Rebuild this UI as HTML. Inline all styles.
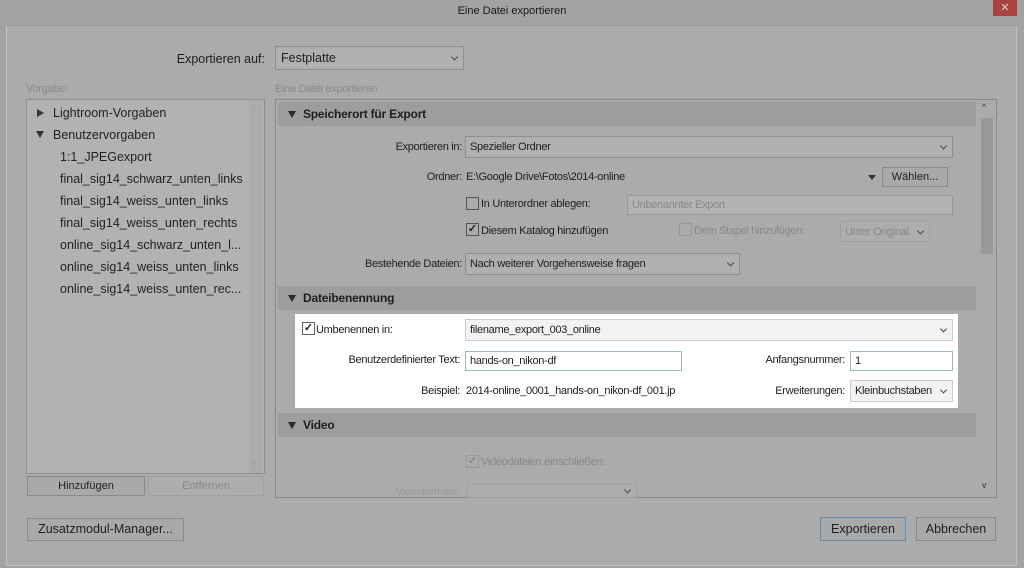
<!DOCTYPE html>
<html><head><meta charset="utf-8"><style>
*{box-sizing:border-box;margin:0;padding:0}
body{width:1024px;height:568px;background:#a2a2a2;font-family:"Liberation Sans",sans-serif;color:#1e1e1e;position:relative;overflow:hidden}
.a{position:absolute;white-space:nowrap}
.t{font-size:11px;letter-spacing:-0.3px;line-height:14px}
.r{text-align:right}
.sel{position:absolute;background:#b0b0b0;border:1px solid #8e8e8e;font-size:11px;letter-spacing:-0.3px;padding:0 4px;color:#1e1e1e;display:flex;align-items:center}
.sel:after{content:"";position:absolute;right:6px;top:50%;width:4px;height:4px;border-right:1.5px solid #444;border-bottom:1.5px solid #444;transform:translateY(-70%) rotate(45deg)}
.inp{position:absolute;background:#b3b3b3;border:1px solid #999;font-size:11px;padding:0 4px;letter-spacing:-0.3px;display:flex;align-items:center}
.btn{position:absolute;background:#a9a9a9;border:1px solid #8a8a8a;text-align:center;font-size:12px;line-height:20px;color:#1e1e1e}
.hdr{position:absolute;left:278px;width:698px;height:24px;background:#9d9d9d;font-weight:bold;font-size:12px;line-height:24px;padding-left:25px;letter-spacing:-0.2px}
.hdr:before{content:"";position:absolute;left:10px;top:9px;border-left:4.5px solid transparent;border-right:4.5px solid transparent;border-top:7px solid #2a2a2a}
.cb{position:absolute;width:13px;height:13px;border:1px solid #555;background:transparent;font-size:11px;line-height:11px;text-align:center;font-weight:bold}
.li{position:absolute;font-size:12.5px;left:60px;color:#222}
</style></head><body>
<div class="a" style="left:0;top:5px;width:1024px;text-align:center;font-size:11px;color:#1a1a1a">Eine Datei exportieren</div>
<div class="a" style="left:993px;top:0;width:24px;height:16px;background:#a94242;color:#e8c8c8;font-size:11px;text-align:center;line-height:16px">✕</div>
<div class="a" style="left:6px;top:25px;width:1011px;height:541px;background:#ababab;border:1px solid #c0c0c0;border-top-color:#9a9a9a"></div>

<div class="a" style="left:120px;top:52px;width:145px;text-align:right;font-size:12.5px">Exportieren auf:</div>
<div class="sel" style="left:275px;top:46px;width:189px;height:24px;font-size:12.5px;padding:0 5px;letter-spacing:0">Festplatte</div>

<div class="a t" style="left:26px;top:82px;color:#8a8a8a">Vorgabe:</div>
<div class="a t" style="left:275px;top:82px;color:#8a8a8a">Eine Datei exportieren</div>

<div class="a" style="left:26px;top:99px;width:239px;height:375px;background:#b2b2b2;border:1px solid #8f8f8f"></div>
<div class="a" style="left:249px;top:100px;width:14px;height:373px;background:#ababab"></div>
<div class="a" style="left:252px;top:104px;font-size:8px;color:#999">^</div>
<div class="a" style="left:251px;top:457px;font-size:9px;color:#999">v</div>
<div class="a" style="left:37px;top:109px;border-top:4.5px solid transparent;border-bottom:4.5px solid transparent;border-left:7px solid #333"></div>
<div class="li" style="left:53px;top:106px">Lightroom-Vorgaben</div>
<div class="a" style="left:36px;top:131px;border-left:4.5px solid transparent;border-right:4.5px solid transparent;border-top:7px solid #333"></div>
<div class="li" style="left:53px;top:128px">Benutzervorgaben</div>
<div class="li" style="top:150px">1:1_JPEGexport</div>
<div class="li" style="top:172px">final_sig14_schwarz_unten_links</div>
<div class="li" style="top:194px">final_sig14_weiss_unten_links</div>
<div class="li" style="top:216px">final_sig14_weiss_unten_rechts</div>
<div class="li" style="top:238px">online_sig14_schwarz_unten_l...</div>
<div class="li" style="top:260px">online_sig14_weiss_unten_links</div>
<div class="li" style="top:282px">online_sig14_weiss_unten_rec...</div>

<div class="btn" style="left:27px;top:476px;width:118px;height:20px;font-size:11px;line-height:18px">Hinzufügen</div>
<div class="btn" style="left:148px;top:476px;width:116px;height:20px;font-size:11px;line-height:18px;color:#8a8a8a;background:#adadad;border-color:#a0a0a0">Entfernen</div>
<div class="btn" style="left:27px;top:518px;width:157px;height:23px;font-size:12.5px">Zusatzmodul-Manager...</div>

<div class="a" style="left:275px;top:99px;width:722px;height:399px;background:#ababab;border:1px solid #8a8a8a"></div>
<div class="a" style="left:979px;top:100px;width:17px;height:397px;background:#ababab"></div>
<div class="a" style="left:981px;top:118px;width:12px;height:136px;background:#989898"></div>
<div class="a" style="left:982px;top:102px;font-size:9px;color:#333">^</div>
<div class="a" style="left:982px;top:480px;font-size:9px;color:#333">v</div>

<div class="hdr" style="top:102px">Speicherort für Export</div>
<div class="a t r" style="left:300px;width:162px;top:140px">Exportieren in:</div>
<div class="sel" style="left:465px;top:136px;width:488px;height:22px">Spezieller Ordner</div>
<div class="a t r" style="left:300px;width:162px;top:170px">Ordner:</div>
<div class="a t" style="left:466px;top:170px">E:\Google Drive\Fotos\2014-online</div>
<div class="a" style="left:868px;top:175px;border-left:4px solid transparent;border-right:4px solid transparent;border-top:5px solid #333"></div>
<div class="btn" style="left:882px;top:167px;width:66px;height:20px;font-size:11px;line-height:18px">Wählen...</div>
<div class="cb" style="left:466px;top:197px"></div>
<div class="a t" style="left:481px;top:197px">In Unterordner ablegen:</div>
<div class="inp" style="left:627px;top:195px;width:326px;height:20px;color:#888">Unbenannter Export</div>
<div class="cb" style="left:466px;top:223px">✓</div>
<div class="a t" style="left:481px;top:224px">Diesem Katalog hinzufügen</div>
<div class="cb" style="left:679px;top:223px;border-color:#999"></div>
<div class="a t" style="left:694px;top:224px;color:#888">Dem Stapel hinzufügen:</div>
<div class="sel" style="left:840px;top:221px;width:90px;height:21px;color:#888;border-color:#a0a0a0;background:#adadad">Unter Original</div>
<div class="a t r" style="left:300px;width:162px;top:257px">Bestehende Dateien:</div>
<div class="sel" style="left:465px;top:253px;width:275px;height:22px">Nach weiterer Vorgehensweise fragen</div>

<div class="hdr" style="top:286px">Dateibenennung</div>
<div class="a" style="left:295px;top:314px;width:663px;height:94px;background:#fff"></div>
<div class="cb" style="left:302px;top:322px;background:#fff;border-color:#666">✓</div>
<div class="a t" style="left:316px;top:323px">Umbenennen in:</div>
<div class="sel" style="left:465px;top:319px;width:488px;height:22px;background:#f2f2f2;border-color:#ccc">filename_export_003_online</div>
<div class="a t r" style="left:300px;width:160px;top:353px">Benutzerdefinierter Text:</div>
<div class="inp" style="left:465px;top:351px;width:217px;height:20px;background:#fff;border-color:#9bb">hands-on_nikon-df</div>
<div class="a t r" style="left:700px;width:145px;top:353px">Anfangsnummer:</div>
<div class="inp" style="left:850px;top:351px;width:103px;height:20px;background:#fff;border-color:#9bb">1</div>
<div class="a t r" style="left:300px;width:160px;top:384px">Beispiel:</div>
<div class="a t" style="left:466px;top:384px">2014-online_0001_hands-on_nikon-df_001.jp</div>
<div class="a t r" style="left:700px;width:145px;top:384px">Erweiterungen:</div>
<div class="sel" style="left:850px;top:380px;width:103px;height:22px;background:#f2f2f2;border-color:#ccc">Kleinbuchstaben</div>

<div class="hdr" style="top:413px">Video</div>
<div class="cb" style="left:466px;top:455px;border-color:#999;color:#888">✓</div>
<div class="a t" style="left:481px;top:455px;color:#888">Videodateien einschließen:</div>
<div class="a t r" style="left:300px;width:160px;top:485px;color:#999">Videoformate:</div>
<div class="sel" style="left:467px;top:484px;width:170px;height:14px;border-color:#a0a0a0;background:#adadad"></div>

<div class="btn" style="left:820px;top:517px;width:86px;height:24px;border-color:#5f8fb8;font-size:12.5px;line-height:22px">Exportieren</div>
<div class="btn" style="left:916px;top:517px;width:80px;height:24px;font-size:12.5px;line-height:22px">Abbrechen</div>
</body></html>
